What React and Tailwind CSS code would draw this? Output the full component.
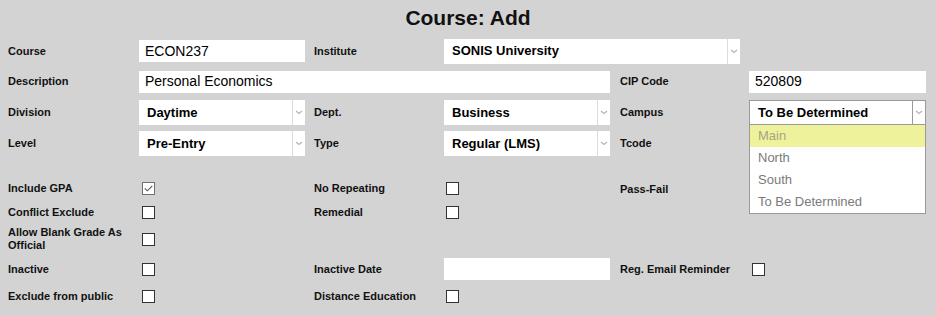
import React from 'react';

const font = { fontFamily: '"Liberation Sans", Arial, sans-serif' };

const Label = ({ children, className = '' }) => (
    <div className={`text-[11px] font-bold text-[#111] leading-[13px] ${className}`}>{children}</div>
);

const TextBox = ({ value = '', className = 'w-[166px]' }) => (
    <div className={`h-[22px] bg-white px-[6px] flex items-center text-[14px] text-black ${className}`}>{value}</div>
);

const Chevron = () => (
    <svg width="8" height="5" viewBox="0 0 8 5" fill="none">
        <path d="M1 1 L4 3.5 L7 1" stroke="#b5b5b5" strokeWidth="1.2" />
    </svg>
);

const Select = ({ value, className = 'w-[166px]', boxed = false }) => (
    <div
        className={`h-[25px] bg-white flex text-[13px] font-bold text-black ${
            boxed ? 'border border-[#9a9a9a]' : ''
        } ${className}`}
    >
        <div className="flex-1 flex items-center pl-[8px]">{value}</div>
        <div className={`w-[13px] flex items-center justify-center border-l ${boxed ? 'border-[#9a9a9a]' : 'border-[#dcdcdc]'}`}>
            <Chevron />
        </div>
    </div>
);

const Check = ({ checked = false, className = '' }) => (
    <div
        className={`w-[13px] h-[13px] bg-white border flex items-center justify-center ${
            checked ? 'border-[#707070]' : 'border-[#333]'
        } ${className}`}
    >
        {checked && (
            <svg width="9" height="7" viewBox="0 0 9 7" fill="none">
                <path d="M0.8 3.4 L3.3 5.8 L8.3 0.8" stroke="#555" strokeWidth="1.1" />
            </svg>
        )}
    </div>
);

const campusOptions = ['Main', 'North', 'South', 'To Be Determined'];

export default function App() {
    return (
        <div className="w-[936px] h-[316px] bg-[#d3d3d3] overflow-hidden" style={font}>
            <div className="h-[36px] flex items-center justify-center text-[21px] font-bold text-[#111] pb-[1px]">
                Course: Add
            </div>

            <div className="pl-[8px] grid grid-cols-[131px_175px_130px_176px_129px_187px]">
                {/* Course */}
                <div className="h-[30px] flex items-center"><Label>Course</Label></div>
                <div className="flex items-center"><TextBox value="ECON237" /></div>
                <div className="flex items-center"><Label>Institute</Label></div>
                <div className="col-span-2 flex items-center">
                    <Select value="SONIS University" className="w-[296px]" />
                </div>
                <div />

                {/* Description */}
                <div className="h-[31px] flex items-center"><Label>Description</Label></div>
                <div className="col-span-3 flex items-center">
                    <TextBox value="Personal Economics" className="w-[471px]" />
                </div>
                <div className="flex items-center"><Label>CIP Code</Label></div>
                <div className="flex items-center"><TextBox value="520809" className="w-[177px]" /></div>

                {/* Division */}
                <div className="h-[31px] flex items-center"><Label>Division</Label></div>
                <div className="flex items-center"><Select value="Daytime" /></div>
                <div className="flex items-center"><Label>Dept.</Label></div>
                <div className="flex items-center"><Select value="Business" /></div>
                <div className="flex items-center"><Label>Campus</Label></div>
                <div className="flex items-center">
                    <div className="relative">
                        <Select value="To Be Determined" className="w-[177px]" boxed />
                        <div className="absolute top-full left-0 w-[177px] bg-white border border-t-0 border-[#9a9a9a] z-10">
                            {campusOptions.map((opt, i) => (
                                <div
                                    key={opt}
                                    className={`h-[22px] flex items-center pl-[8px] text-[13px] ${
                                        i === 0 ? 'bg-[#eef39b] text-[#a3a38a]' : 'text-[#7a7a7a]'
                                    }`}
                                >
                                    {opt}
                                </div>
                            ))}
                        </div>
                    </div>
                </div>

                {/* Level */}
                <div className="h-[31px] flex items-center"><Label>Level</Label></div>
                <div className="flex items-center"><Select value="Pre-Entry" /></div>
                <div className="flex items-center"><Label>Type</Label></div>
                <div className="flex items-center"><Select value="Regular (LMS)" /></div>
                <div className="flex items-center"><Label>Tcode</Label></div>
                <div />

                {/* spacer */}
                <div className="col-span-6 h-[17px]" />

                {/* Include GPA */}
                <div className="h-[24px] flex items-center"><Label>Include GPA</Label></div>
                <div className="flex items-center pl-[3px]"><Check checked /></div>
                <div className="flex items-center"><Label>No Repeating</Label></div>
                <div className="flex items-center pl-[2px]"><Check /></div>
                <div className="flex items-center pt-[2px]"><Label>Pass-Fail</Label></div>
                <div />

                {/* Conflict Exclude */}
                <div className="h-[24px] flex items-center"><Label>Conflict Exclude</Label></div>
                <div className="flex items-center pl-[3px]"><Check /></div>
                <div className="flex items-center"><Label>Remedial</Label></div>
                <div className="flex items-center pl-[2px]"><Check /></div>
                <div />
                <div />

                {/* Allow Blank */}
                <div className="h-[30px] flex items-center"><Label>Allow Blank Grade As<br />Official</Label></div>
                <div className="flex items-center pl-[3px]"><Check /></div>
                <div />
                <div />
                <div />
                <div />

                {/* Inactive */}
                <div className="h-[30px] flex items-center"><Label>Inactive</Label></div>
                <div className="flex items-center pl-[3px]"><Check /></div>
                <div className="flex items-center"><Label>Inactive Date</Label></div>
                <div className="flex items-center"><TextBox /></div>
                <div className="flex items-center"><Label>Reg. Email Reminder</Label></div>
                <div className="flex items-center pl-[3px]"><Check /></div>

                {/* Exclude from public */}
                <div className="h-[24px] flex items-center"><Label>Exclude from public</Label></div>
                <div className="flex items-center pl-[3px]"><Check /></div>
                <div className="flex items-center"><Label>Distance Education</Label></div>
                <div className="flex items-center pl-[2px]"><Check /></div>
                <div />
                <div />
            </div>
        </div>
    );
}
